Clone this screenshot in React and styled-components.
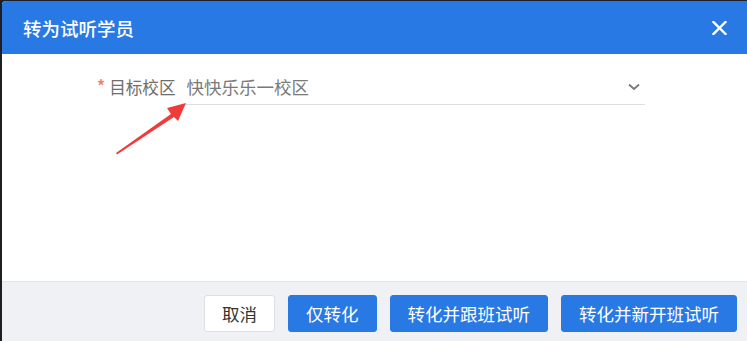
import React from 'react';
import styled, { createGlobalStyle } from 'styled-components';

const GlobalStyle = createGlobalStyle`
	html, body {
		margin: 0;
		padding: 0;
		background: #1e1f22;
		overflow: hidden;
	}
	body {
		font-family: "Noto Sans CJK SC", "Noto Sans", sans-serif;
	}
`;

const Dialog = styled.div`
	margin: 1px 0 0 2px;
	height: 340px;
	display: flex;
	flex-direction: column;
	background: #fff;
	border-top-left-radius: 4px;
	overflow: hidden;
`;

const Header = styled.div`
	height: 53px;
	flex: none;
	display: flex;
	align-items: center;
	justify-content: space-between;
	padding: 0 20px 0 21px;
	background: #2979e5;
	color: #fff;
`;

const Title = styled.h2`
	margin: 0;
	font-size: 18.5px;
	font-weight: 500;
`;

const Close = styled.button`
	width: 16px;
	height: 16px;
	padding: 0;
	border: 0;
	background: none;
	display: flex;
	align-items: center;
	justify-content: center;
	cursor: pointer;
`;

const Body = styled.div`
	position: relative;
	flex: 1;
	padding: 17px 0 0 95px;
`;

const FormRow = styled.div`
	display: flex;
	align-items: center;
	gap: 6px;
`;

const Label = styled.label`
	display: flex;
	align-items: center;
	gap: 4px;
	font-size: 16.6px;
	color: #6e6e6e;
	line-height: 34px;
	height: 34px;
	padding-bottom: 2px;
	box-sizing: border-box;
`;

const Required = styled.span`
	color: #f57f6e;
	font-size: 16px;
	font-weight: 700;
	margin-top: -4px;
`;

const Select = styled.div`
	width: 463px;
	height: 34px;
	box-sizing: border-box;
	display: flex;
	align-items: center;
	justify-content: space-between;
	padding: 0 5px 2px 5px;
	border-bottom: 1px solid #dddfe4;
	font-size: 17.5px;
	color: #7a7a7a;
`;

const Arrow = styled.svg`
	position: absolute;
	left: 110px;
	top: 42px;
	pointer-events: none;
`;

const Footer = styled.div`
	height: 60px;
	flex: none;
	box-sizing: border-box;
	display: flex;
	justify-content: flex-end;
	align-items: flex-start;
	gap: 13px;
	padding: 13px 10px 0 0;
	background: #f0f1f5;
	border-top: 1px solid #e1e4ea;
`;

const Button = styled.button`
	height: 37px;
	padding: 0 17px;
	border-radius: 3px;
	font-family: inherit;
	font-size: 17.5px;
	line-height: 1;
	cursor: pointer;
	border: 1px solid ${(p) => (p.$primary ? '#2979e5' : '#dcdfe6')};
	background: ${(p) => (p.$primary ? '#2979e5' : '#fff')};
	color: ${(p) => (p.$primary ? '#fff' : '#333')};
`;

export default function App() {
	return (
		<>
			<GlobalStyle />
			<Dialog>
				<Header>
					<Title>转为试听学员</Title>
					<Close aria-label="关闭">
						<svg width="15" height="14" viewBox="0 0 15 14">
							<path d="M1.5 1 L13.5 13 M13.5 1 L1.5 13" stroke="#fff" strokeWidth="2.4" strokeLinecap="square" />
						</svg>
					</Close>
				</Header>
				<Body>
					<FormRow>
						<Label>
							<Required>*</Required>
							目标校区
						</Label>
						<Select>
							<span>快快乐乐一校区</span>
							<svg width="12" height="8" viewBox="0 0 12 8">
								<polyline points="1,1.5 6,6 11,1.5" fill="none" stroke="#777" strokeWidth="1.8" />
							</svg>
						</Select>
					</FormRow>
					<Arrow width="80" height="60" viewBox="0 0 80 60">
						<polygon points="4,57 59,18 55,12 74,7 66,25 62,21 5,58.5" fill="#f03b3b" />
					</Arrow>
				</Body>
				<Footer>
					<Button>取消</Button>
					<Button $primary>仅转化</Button>
					<Button $primary>转化并跟班试听</Button>
					<Button $primary>转化并新开班试听</Button>
				</Footer>
			</Dialog>
		</>
	);
}
